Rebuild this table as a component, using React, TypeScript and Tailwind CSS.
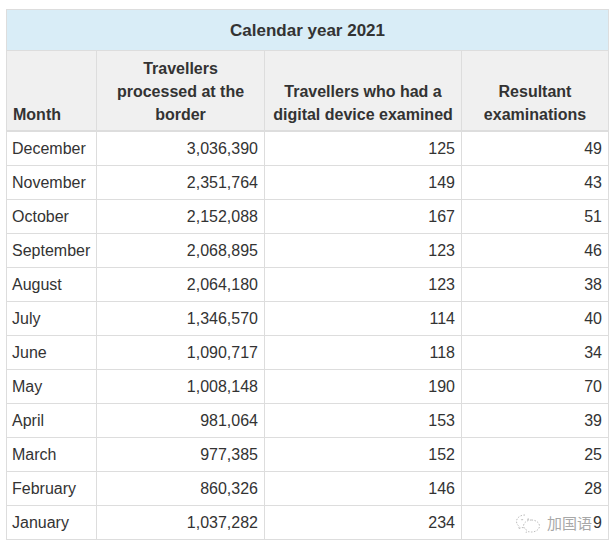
import React from "react";

const rows: [string, string, string, string][] = [
  ["December", "3,036,390", "125", "49"],
  ["November", "2,351,764", "149", "43"],
  ["October", "2,152,088", "167", "51"],
  ["September", "2,068,895", "123", "46"],
  ["August", "2,064,180", "123", "38"],
  ["July", "1,346,570", "114", "40"],
  ["June", "1,090,717", "118", "34"],
  ["May", "1,008,148", "190", "70"],
  ["April", "981,064", "153", "39"],
  ["March", "977,385", "152", "25"],
  ["February", "860,326", "146", "28"],
  ["January", "1,037,282", "234", "9"],
];

// watermark that sits over the last cell in the source image
const Watermark = () => (
  <span className="inline-flex items-center gap-[6px] mr-[1px] align-top text-[15px] leading-[23px] text-[#a8a8a8] font-['Noto_Sans_CJK_SC',sans-serif]">
    <svg width="26" height="20" viewBox="0 0 26 20" fill="none" stroke="#bdbdbd" strokeWidth="1" strokeDasharray="1.5 1.5">
      <path d="M10 2C5 2 1.5 5 1.5 8.5c0 2 1.1 3.7 2.8 4.9L3.6 16l3-1.6c1 .3 2.2.5 3.4.5" />
      <path d="M16.5 7c4.4 0 8 2.7 8 6s-3.6 6-8 6c-.9 0-1.8-.1-2.6-.4L11 19.5l.8-2.3C9.8 16 8.5 14.6 8.5 13c0-3.3 3.6-6 8-6z" />
      <circle cx="7" cy="6.5" r=".6" fill="#bdbdbd" />
      <circle cx="13" cy="6" r=".6" fill="#bdbdbd" />
    </svg>
    <span>加国语</span>
  </span>
);

export default function App() {
  return (
    <div className="min-h-screen bg-white pt-[9px] pl-[6px] font-['Liberation_Sans',Arial,sans-serif] text-[#333] text-[16px]">
      <table className="table-fixed border-collapse w-[602px] leading-[23px]">
        <colgroup>
          <col className="w-[90px]" />
          <col className="w-[168px]" />
          <col className="w-[197px]" />
          <col className="w-[147px]" />
        </colgroup>
        <thead>
          <tr>
            <th
              colSpan={4}
              className="bg-[#d9edf7] border border-[#ddd] h-[41px] text-[17px] font-bold text-center align-middle"
            >
              Calendar year 2021
            </th>
          </tr>
          <tr className="bg-[#f0f0f0]">
            <th className="border border-[#ddd] border-b-2 px-[6px] pt-[6px] pb-[4px] text-left align-bottom font-bold">
              Month
            </th>
            <th className="border border-[#ddd] border-b-2 px-[6px] pt-[6px] pb-[4px] text-center align-bottom font-bold">
              Travellers processed at the border
            </th>
            <th className="border border-[#ddd] border-b-2 px-[6px] pt-[6px] pb-[4px] text-center align-bottom font-bold">
              Travellers who had a digital device examined
            </th>
            <th className="border border-[#ddd] border-b-2 px-[6px] pt-[6px] pb-[4px] text-center align-bottom font-bold">
              Resultant examinations
            </th>
          </tr>
        </thead>
        <tbody>
          {rows.map((r, i) => (
            <tr key={r[0]} className="h-[34px]">
              <td className="border border-[#ddd] pl-[5px] pr-[6px] py-[5px] text-left whitespace-nowrap">{r[0]}</td>
              <td className="border border-[#ddd] px-[6px] py-[5px] text-right">{r[1]}</td>
              <td className="border border-[#ddd] px-[6px] py-[5px] text-right">{r[2]}</td>
              <td className="border border-[#ddd] px-[6px] py-[5px] text-right whitespace-nowrap">
                {i === rows.length - 1 && <Watermark />}
                {r[3]}
              </td>
            </tr>
          ))}
        </tbody>
      </table>
    </div>
  );
}
